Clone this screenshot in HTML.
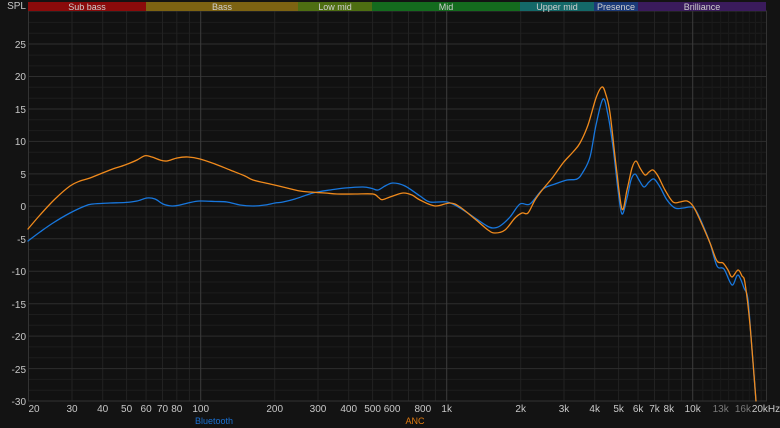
<!DOCTYPE html>
<html><head><meta charset="utf-8"><style>
html,body{margin:0;padding:0;background:#131313;}
svg{display:block;}
text{font-family:"Liberation Sans",sans-serif;}
</style></head><body>
<svg id="s" width="780" height="428" viewBox="0 0 780 428" xmlns="http://www.w3.org/2000/svg">
<rect width="780" height="428" fill="#131313"/>
<rect x="28.5" y="11" width="738" height="390" fill="#111111"/>
<g stroke="#1d1d1d" stroke-width="1">
<path d="M28 22.4H767M28 33.2H767M28 55.1H767M28 65.9H767M28 87.3H767M28 98.2H767M28 119.8H767M28 130.6H767M28 152.2H767M28 163.1H767M28 184.7H767M28 195.5H767M28 217.1H767M28 228H767M28 249.6H767M28 260.4H767M28 282H767M28 292.9H767M28 314.5H767M28 325.3H767M28 346.9H767M28 357.8H767M28 379.4H767M28 390.2H767"/>
</g>
<g stroke="#222" stroke-width="1">
<path d="M72 11V401M102.7 11V401M126.6 11V401M146.1 11V401M162.5 11V401M176.8 11V401M189.4 11V401M274.7 11V401M318 11V401M348.7 11V401M372.6 11V401M392.1 11V401M408.5 11V401M422.8 11V401M435.4 11V401M520.7 11V401M564 11V401M594.7 11V401M618.6 11V401M638.1 11V401M654.5 11V401M668.8 11V401M681.4 11V401"/>
</g>
<g stroke="#1b1b1b" stroke-width="1">
<path d="M702.8 11V401M712.1 11V401M720.7 11V401M728.6 11V401M736 11V401M742.9 11V401M749.3 11V401M755.4 11V401M761.2 11V401"/>
</g>
<g stroke="#2e2e2e" stroke-width="1">
<path d="M28 44H767M28 76.5H767M28 109H767M28 141.4H767M28 173.9H767M28 206.3H767M28 238.8H767M28 271.2H767M28 303.7H767M28 336.1H767M28 368.6H767"/>
</g>
<g stroke="#3c3c3c" stroke-width="1">
<path d="M200.7 11V401M446.7 11V401M692.7 11V401"/>
</g>
<rect x="28.5" y="11" width="738" height="390" fill="none" stroke="#333" stroke-width="1"/>
<rect x="28" y="2" width="118" height="9" fill="#8a0b0b"/>
<rect x="146" y="2" width="152" height="9" fill="#7d6312"/>
<rect x="298" y="2" width="74" height="9" fill="#4e6e12"/>
<rect x="372" y="2" width="148" height="9" fill="#146b1e"/>
<rect x="520" y="2" width="74" height="9" fill="#146868"/>
<rect x="594" y="2" width="44" height="9" fill="#1b3a78"/>
<rect x="638" y="2" width="128" height="9" fill="#3a1b5c"/>
<g font-size="9" fill="#cfcfcf" text-anchor="middle">
<text x="87" y="10">Sub bass</text>
<text x="222" y="10">Bass</text>
<text x="335" y="10">Low mid</text>
<text x="446" y="10">Mid</text>
<text x="557" y="10">Upper mid</text>
<text x="616" y="10">Presence</text>
<text x="702" y="10">Brilliance</text>
</g>
<g font-size="10" fill="#c8c8c8" text-anchor="end">
<text x="26" y="9">SPL</text>
<text x="26" y="48">25</text>
<text x="26" y="80">20</text>
<text x="26" y="113">15</text>
<text x="26" y="145">10</text>
<text x="26" y="178">5</text>
<text x="26" y="210">0</text>
<text x="26" y="243">-5</text>
<text x="26" y="275">-10</text>
<text x="26" y="308">-15</text>
<text x="26" y="340">-20</text>
<text x="26" y="373">-25</text>
<text x="26" y="405">-30</text>
</g>
<g font-size="10" fill="#c8c8c8" text-anchor="middle">
<text x="34" y="412">20</text>
<text x="72" y="412">30</text>
<text x="102.7" y="412">40</text>
<text x="126.6" y="412">50</text>
<text x="146.1" y="412">60</text>
<text x="162.5" y="412">70</text>
<text x="176.8" y="412">80</text>
<text x="200.7" y="412">100</text>
<text x="274.7" y="412">200</text>
<text x="318" y="412">300</text>
<text x="348.7" y="412">400</text>
<text x="372.6" y="412">500</text>
<text x="392.1" y="412">600</text>
<text x="422.8" y="412">800</text>
<text x="446.7" y="412">1k</text>
<text x="520.7" y="412">2k</text>
<text x="564" y="412">3k</text>
<text x="594.7" y="412">4k</text>
<text x="618.6" y="412">5k</text>
<text x="638.1" y="412">6k</text>
<text x="654.5" y="412">7k</text>
<text x="668.8" y="412">8k</text>
<text x="692.7" y="412">10k</text>
<text x="720.7" y="412" fill="#7a7a7a">13k</text>
<text x="742.9" y="412" fill="#7a7a7a">16k</text>
<text x="766" y="412">20kHz</text>
</g>
<text x="214" y="424" font-size="9" fill="#1a6fd0" text-anchor="middle">Bluetooth</text>
<text x="415" y="424" font-size="9" fill="#e07a10" text-anchor="middle">ANC</text>
<g id="curves" fill="none" stroke-width="1.3" stroke-linejoin="round" stroke-linecap="round">
<polyline stroke="#1877dd" points="28,241 40,232 53,223 70,213 85,206 93,204 110,203 125,202.5 137,201 147,198 155,199 163,204 172,206 180,205 190,202.5 200,201 215,201.5 227,202 240,205 253,206 265,205 275,203 283,202 295,199 313,193 330,190 345,188 363,187 372,188.5 378,190 385,186 393,183 405,186 420,196 430,202 447,202 460,208 475,218 487,226 493,228 500,226 510,217 520,204 530,204 543,189 555,184 567,180 577,179 583,172 590,157 596,125 603,99 608,115 613,147 618,190 622,214 627,198 631,180 635,174 639,180 644,187 649,182 654,179 660,187 667,200 675,208 683,208 690,207 695,209 702,223 710,243 717,266 724,269 732,285 738,275 744,288 748,300 752,350 756,401"/>
<polyline stroke="#f08a1c" points="28,229 40,215 55,199 70,186 80,181 90,178 110,170 125,165 137,160 145,155.7 152,157 160,160 167,161 177,158 188,157 200,159 215,164 230,170 245,176 253,180 270,184 287,188 300,191 310,192 325,193 337,194 355,194 373,194 378,197 382,199.7 390,197 403,193 412,195 420,200 435,206 450,203 460,207 475,219 488,230 495,233 505,230 515,218 522,213 528,213 535,200 543,189 553,177 563,163 573,152 580,143 588,125 596,98 602,87 606,95 610,113 616,165 622,209 627,190 632,168 636,161 640,168 645,175 649,172 653,170 658,176 665,190 673,202 680,202 687,201 693,206 700,220 710,243 717,261 723,263 728,270 732,277 738,270 742,276 745,283 750,325 756,401"/>
</g>
</svg>
<script>
(function(){
var ns="http://www.w3.org/2000/svg";
var pls=document.querySelectorAll("#curves polyline");
for(var k=0;k<pls.length;k++){
var pl=pls[k];
var p=pl.getAttribute("points").trim().split(/\s+/).map(function(s){var a=s.split(",");return [+a[0],+a[1]];});
var d="M"+p[0][0]+" "+p[0][1];
for(var i=0;i<p.length-1;i++){
var p0=p[i-1]||p[i],p1=p[i],p2=p[i+1],p3=p[i+2]||p2;
var c1x=p1[0]+(p2[0]-p0[0])/6,c1y=p1[1]+(p2[1]-p0[1])/6;
var c2x=p2[0]-(p3[0]-p1[0])/6,c2y=p2[1]-(p3[1]-p1[1])/6;
d+="C"+c1x.toFixed(1)+" "+c1y.toFixed(1)+" "+c2x.toFixed(1)+" "+c2y.toFixed(1)+" "+p2[0]+" "+p2[1];
}
var path=document.createElementNS(ns,"path");
path.setAttribute("d",d);
path.setAttribute("stroke",pl.getAttribute("stroke"));
pl.parentNode.replaceChild(path,pl);
}
})();
</script>
</body></html>
